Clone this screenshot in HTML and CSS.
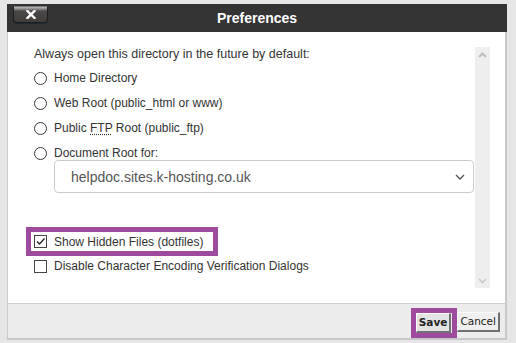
FILE: index.html
```html
<!DOCTYPE html>
<html lang="en">
<head>
<meta charset="utf-8">
<title>Preferences</title>
<link rel="stylesheet" href="styles.css">
</head>
<body>
<div class="dialog">
  <div class="titlebar">
    <button class="close" type="button" aria-label="Close">
      <svg width="10" height="9" viewBox="0 0 10 9"><path d="M1.5 1 L8.5 8 M8.5 1 L1.5 8" stroke="#fff" stroke-width="2.4" stroke-linecap="square"/></svg>
    </button>
    <div class="title">Preferences</div>
  </div>
  <div class="body">
    <div class="pane">
      <div class="content">
        <div class="heading">Always open this directory in the future by default:</div>
        <div class="row"><span class="radio"></span><span>Home Directory</span></div>
        <div class="row"><span class="radio"></span><span>Web Root (public_html or www)</span></div>
        <div class="row"><span class="radio"></span><span>Public <abbr class="abbr">FTP</abbr> Root (public_ftp)</span></div>
        <div class="row"><span class="radio"></span><span>Document Root for:</span></div>
        <div class="select">
          <span>helpdoc.sites.k-hosting.co.uk</span>
          <svg class="chev" width="10" height="6" viewBox="0 0 10 6"><path d="M1 1 L5 5 L9 1" fill="none" stroke="#555" stroke-width="1.3"/></svg>
        </div>
        <div class="row highlight"><span class="check checked"><svg width="11" height="11" viewBox="0 0 11 11"><path d="M2 5.5 L4.5 8 L9.5 2.5" fill="none" stroke="#222" stroke-width="1.4"/></svg></span><span>Show Hidden Files (dotfiles)</span></div>
        <div class="row row2"><span class="check"></span><span>Disable Character Encoding Verification Dialogs</span></div>
      </div>
      <div class="scrollbar">
        <svg width="9" height="6" viewBox="0 0 9 6"><path d="M1 5 L4.5 1.5 L8 5" fill="none" stroke="#bdbdbd" stroke-width="2"/></svg>
        <svg width="9" height="6" viewBox="0 0 9 6"><path d="M1 1 L4.5 4.5 L8 1" fill="none" stroke="#c8c8c8" stroke-width="1.6"/></svg>
      </div>
    </div>
  </div>
  <div class="footer">
    <div class="savebox"><button class="btn save" type="button">Save</button></div>
    <button class="btn" type="button">Cancel</button>
  </div>
</div>
</body>
</html>
```

FILE: styles.css
```css
html, body {
  margin: 0;
  padding: 0;
}
body {
  background: #e6e6e6;
  padding: 4px 0 0 7px;
  font-family: "Liberation Sans", Arial, sans-serif;
  font-size: 12px;
  color: #333;
}
.dialog {
  width: 500px;
}
.titlebar {
  height: 28px;
  background: #343434;
  display: flex;
  align-items: center;
  position: relative;
}
.close {
  position: absolute;
  left: 6px;
  top: 2px;
  width: 35px;
  height: 17px;
  padding: 0;
  border: 1px solid #1e1e1e;
  border-top-color: #777;
  border-radius: 0 0 4px 4px;
  background: linear-gradient(#b9b9b9 0, #8a8a8a 2px, #4c4848 4px, #3f3c3c 100%);
  box-shadow: 0 1px 0 #1d2a33;
  display: flex;
  align-items: center;
  justify-content: center;
}
.close svg {
  display: block;
}
.title {
  flex: 1;
  text-align: center;
  color: #fff;
  font-weight: bold;
  font-size: 14px;
}
.body {
  background: #fff;
  border-left: 1px solid #cbcbcb;
  border-right: 2px solid #c8c8c8;
  height: 271px;
  box-sizing: border-box;
  padding: 15px 15px 15px 26px;
}
.pane {
  display: flex;
  height: 100%;
}
.content {
  flex: 1;
  display: flex;
  flex-direction: column;
}
.heading {
  height: 15px;
  line-height: 15px;
  font-size: 12.5px;
}
.row {
  height: 18px;
  margin-top: 7px;
  display: flex;
  align-items: center;
  gap: 7px;
}
.radio {
  width: 13px;
  height: 13px;
  box-sizing: border-box;
  border: 1.5px solid #3a3a3a;
  border-radius: 50%;
  flex: none;
}
.abbr {
  text-decoration: underline dotted;
  text-underline-offset: 2px;
}
.select {
  margin-top: -2px;
  margin-left: 20px;
  width: 420px;
  height: 33px;
  box-sizing: border-box;
  border: 1px solid #cccccc;
  border-radius: 4px;
  display: flex;
  align-items: center;
  justify-content: space-between;
  padding: 0 8px 0 16px;
  font-size: 14px;
  color: #555;
}
.chev {
  display: block;
}
.check {
  width: 13px;
  height: 13px;
  box-sizing: border-box;
  border: 1px solid #444;
  flex: none;
  display: flex;
  align-items: center;
  justify-content: center;
  background: #fff;
}
.check svg {
  display: block;
}
.highlight {
  margin-top: 34px;
  margin-left: -8px;
  height: 19px;
  width: fit-content;
  border: 5px solid #9d4a9f;
  padding: 0 10px 0 3px;
}
.row2 {
  margin-top: 1px;
}
.scrollbar {
  width: 15px;
  background: #eeeeee;
  display: flex;
  flex-direction: column;
  justify-content: space-between;
  align-items: center;
  padding: 5px 0 4px;
  box-sizing: border-box;
}
.scrollbar svg {
  display: block;
}
.footer {
  background: #ececec;
  border-top: 1px solid #cfcfcf;
  border-left: 1px solid #cbcbcb;
  border-right: 2px solid #c8c8c8;
  border-bottom: 2px solid #c8c8c8;
  height: 34px;
  box-sizing: content-box;
  display: flex;
  align-items: center;
  justify-content: flex-end;
  padding-right: 5px;
}
.savebox {
  border: 5px solid #9d4a9f;
  padding: 0 1px 0 0;
  display: flex;
  margin-top: 3px;
}
.btn {
  font-family: "DejaVu Sans", Verdana, sans-serif;
  font-size: 10.5px;
  color: #222;
  height: 20px;
  padding: 0 2px;
  background: #efefef;
  border-style: solid;
  border-width: 1px 2px 2px 1px;
  border-color: #fdfdfd #707070 #707070 #fdfdfd;
  margin-top: 1px;
}
.save {
  font-weight: bold;
  background: #e3e3e3;
  margin-top: 0;
}
```
